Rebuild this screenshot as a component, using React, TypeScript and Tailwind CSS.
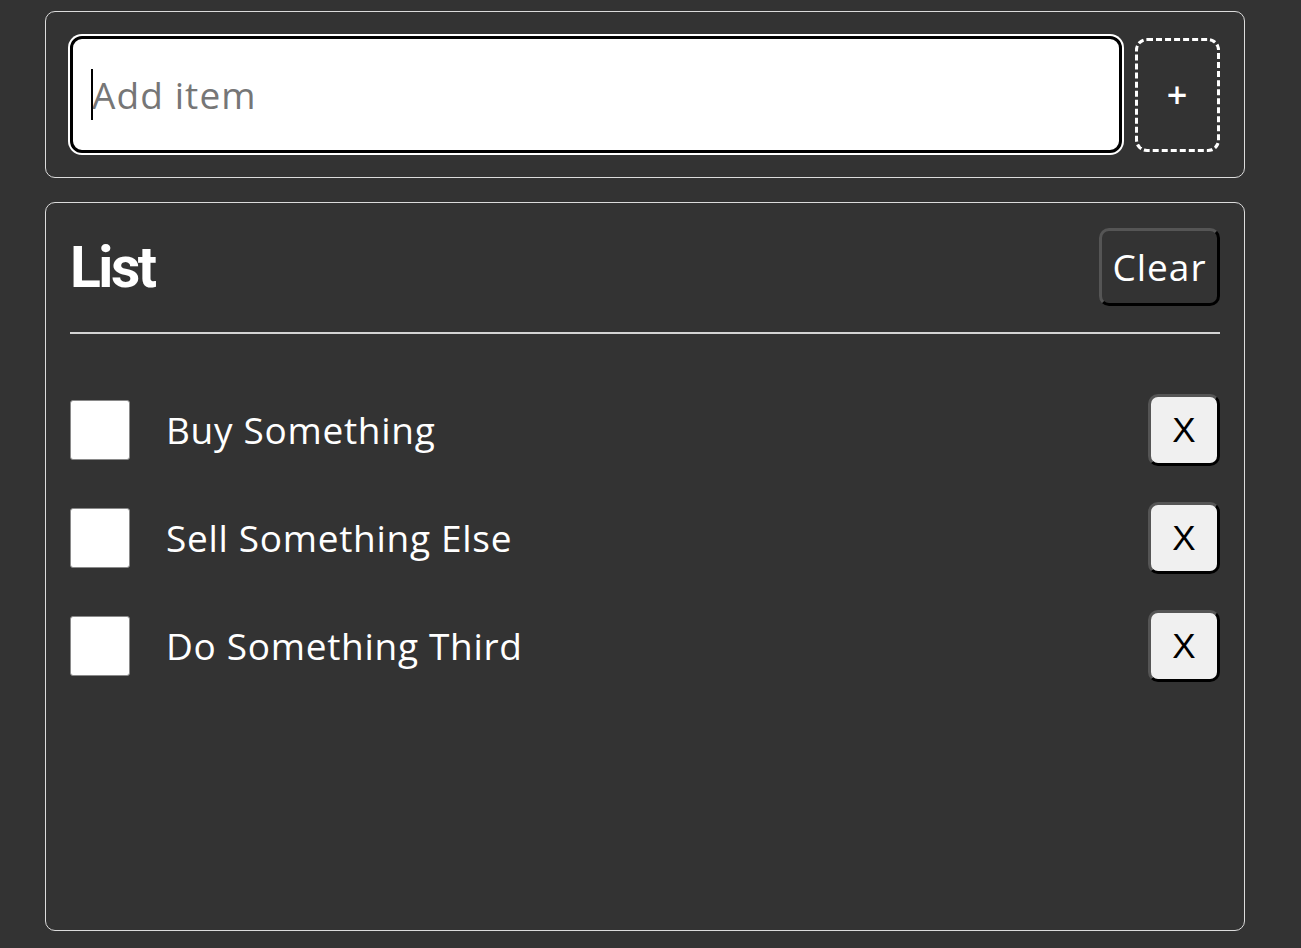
import { useState } from 'react';

const initialItems = [
  { id: 1, text: 'Buy Something', done: false },
  { id: 2, text: 'Sell Something Else', done: false },
  { id: 3, text: 'Do Something Third', done: false },
];

export default function App() {
  const [items, setItems] = useState(initialItems);
  const [draft, setDraft] = useState('');

  return (
    <div className="min-h-screen bg-[#333333] pt-[11px] pl-[45px] font-['Open_Sans',sans-serif] text-white tracking-[0.7px]">
      <div className="w-[1200px] flex flex-col gap-[24px]">
        {/* add form */}
        <div className="flex items-center gap-[13px] border border-[#dcdcdc] rounded-[10px] p-[24px]">
          <div className="relative flex-1">
            <input
              type="text"
              value={draft}
              onChange={(e) => setDraft(e.target.value)}
              placeholder="Add item"
              className="w-full h-[117px] bg-white border-[3px] border-black rounded-[12px] shadow-[0_0_0_2px_#ffffff] pl-[19px] text-[37px] tracking-[1.1px] text-black placeholder:text-[#767676] outline-none"
            />
            <span className="absolute left-[21px] top-[33px] w-[2px] h-[51px] bg-black" />
          </div>
          <button className="w-[85px] h-[114px] border-[3px] border-dashed border-white rounded-[12px] text-[36px] font-semibold leading-none text-white">
            +
          </button>
        </div>

        {/* list */}
        <div className="h-[729px] border border-[#dcdcdc] rounded-[10px] p-[24px]">
          <div className="flex items-center justify-between h-[107px] pb-[25px] border-b-2 border-[#d4d4d4]">
            <h1 className="font-['Roboto',sans-serif] font-bold text-[57px] leading-none tracking-[-2.5px]">List</h1>
            <button
              onClick={() => setItems([])}
              className="w-[121px] h-[78px] bg-[#333333] border-[3px] border-t-[#555555] border-l-[#555555] border-b-black border-r-black rounded-[10px] text-[37px] tracking-[1px] text-white"
            >
              Clear
            </button>
          </div>

          <ul className="mt-[60px] flex flex-col gap-[36px]">
            {items.map((item) => (
              <li key={item.id} className="flex items-center h-[72px]">
                <input
                  type="checkbox"
                  checked={item.done}
                  onChange={() =>
                    setItems(items.map((i) => (i.id === item.id ? { ...i, done: !i.done } : i)))
                  }
                  className="appearance-none w-[60px] h-[60px] bg-white border border-[#8a8a8a] rounded-[3px]"
                />
                <span className="ml-[36px] flex-1 text-[37px]">{item.text}</span>
                <button
                  onClick={() => setItems(items.filter((i) => i.id !== item.id))}
                  className="w-[72px] h-[72px] bg-[#f0f0f0] border-[3px] border-t-[#555555] border-l-[#555555] border-b-black border-r-black rounded-[10px] font-['Liberation_Sans',sans-serif] text-[35px] tracking-normal text-black"
                >
                  X
                </button>
              </li>
            ))}
          </ul>
        </div>
      </div>
    </div>
  );
}
